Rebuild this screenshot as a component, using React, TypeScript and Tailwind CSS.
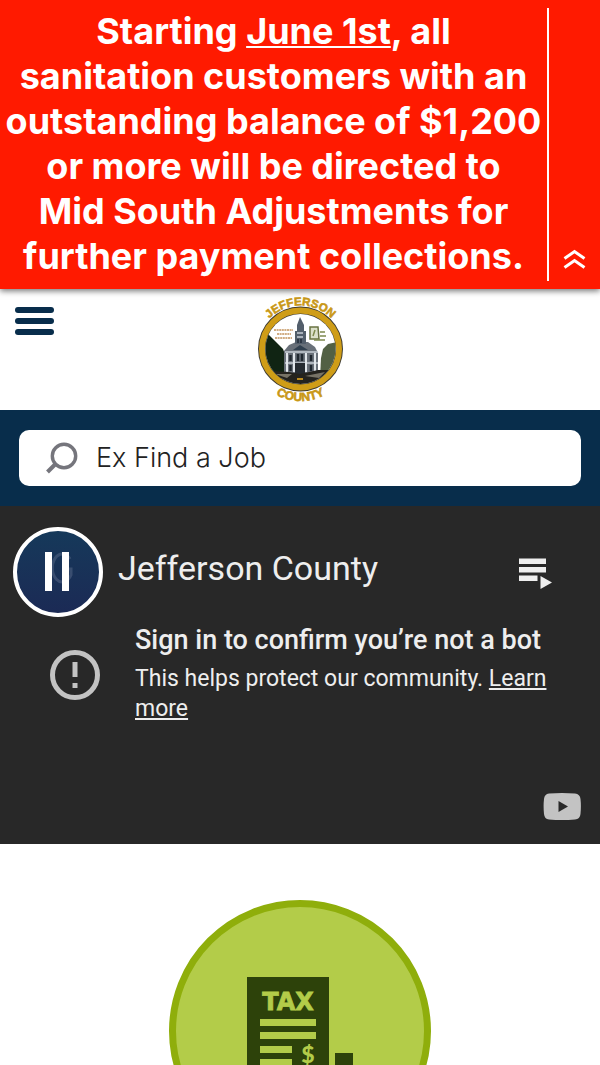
import type { ReactNode } from "react";

function AlertBanner() {
  return (
    <section
      aria-label="Alert"
      className="relative z-10 flex bg-[#ff1a00] py-2 text-white shadow-[0_2px_6px_rgba(0,0,0,0.55)]"
    >
      <p className="flex-1 pt-px pb-0.5 text-center text-[36px] leading-[45px] font-bold">
        Starting{" "}
        <span className="underline decoration-2 underline-offset-2">June 1st</span>, all
        <br />
        sanitation customers with an
        <br />
        outstanding balance of $1,200
        <br />
        or more will be directed to
        <br />
        Mid South Adjustments for
        <br />
        further payment collections.
      </p>
      <div className="flex w-[53px] items-end justify-center border-l-2 border-white pb-2">
        <button type="button" aria-label="Collapse alert" className="block">
          <svg width="24" height="28" viewBox="0 0 24 28" fill="none" stroke="#fff" strokeWidth="3">
            <path d="M1.500 13.500 L11.500 6.500 L21.500 13.500" />
            <path d="M1.500 22.500 L11.500 15.500 L21.500 22.500" />
          </svg>
        </button>
      </div>
    </section>
  );
}

function CountySeal() {
  return (
    <svg className="overflow-visible" width="90" height="108" viewBox="0 0 90 108" role="img" aria-label="Jefferson County">
      <defs>
        <path id="arc-top" d="M2 53 A43.500 43.500 0 0 1 89 53" />
        <path id="arc-bottom" d="M-6.500 53 A52 52 0 0 0 97.500 53" />
        <clipPath id="seal-clip">
          <circle cx="45.5" cy="53" r="35" />
        </clipPath>
      </defs>
      <circle cx="45.5" cy="53" r="42.5" fill="#3d3a30" />
      <circle cx="45.5" cy="53" r="38.5" fill="none" stroke="#cf9d17" strokeWidth="6" />
      <circle cx="45.5" cy="53" r="35" fill="#fff" />
      <g clipPath="url(#seal-clip)">
        <path d="M4 34 L12 37 L20 45 L28 53 L32 64 L31 82 L4 82 Z" fill="#102413" />
        <path d="M66 62 L68 53 L73 48 L82 46 L86 82 L65 82 Z" fill="#526044" />
        <path d="M29 55 L34 49 L41 46 L53 46 L60 51 L63 57 V80 H29 Z" fill="#697079" />
        <path d="M45 21 L49 29 V35 H51 V48 H40 V35 H42 V29 Z" fill="#535e6b" />
        <path d="M42 37 H48 M42 41 H48 M30 56 H63 M30 67 H63" stroke="#c7ced6" strokeWidth="1.3" />
        <path d="M43 43 V47 M46 43 V47" stroke="#202b37" strokeWidth="1.5" />
        <path d="M38 54 L45 49 L53 54 Z" fill="#31404f" />
        <path d="M32 57 V76 M39 57 V76 M51 57 V76 M60 57 V76" stroke="#e1e6eb" strokeWidth="2" />
        <path d="M35.500 59 V65 M35.500 69 V75 M43 58 V65 M47 58 V65 M56 59 V65 M56 69 V75" stroke="#202830" strokeWidth="2.500" />
        <path d="M40 67 H50 V78 H40 Z" fill="#252b31" />
        <path d="M4 74 L34 76 L45 78 L63 74 L86 74 V92 H4 Z" fill="#24231e" />
        <path d="M20 78 L37 78 L32 82 Z M50 80 L70 76 L64 82 Z" fill="#777366" />
        <path d="M19 34 H38 M22 38 H36 M20 42 H37" stroke="#c69864" strokeWidth="2" strokeDasharray="2 0.600" opacity="0.8" />
        <path d="M55 31 H63 L64 43 H55 Z" fill="#dbe0ca" stroke="#697342" strokeWidth="1.500" />
        <path d="M60 34 L58 40 M65 36 H70 M65 40 H71 M59 44 H70" stroke="#7e894d" strokeWidth="1.500" />
        <path d="M42 83 H48" stroke="#ba8b20" strokeWidth="2" />
      </g>
      <g
        fill="#c99817"
        stroke="#c99817"
        strokeWidth="0.6"
        fontFamily="'Liberation Sans', sans-serif"
        fontWeight="700"
        fontSize="11.5"
        textAnchor="middle"
      >
        <text>
          <textPath href="#arc-top" startOffset="50%">JEFFERSON</textPath>
        </text>
        <text fontSize="12">
          <textPath href="#arc-bottom" startOffset="50%">COUNTY</textPath>
        </text>
      </g>
    </svg>
  );
}

function Header() {
  return (
    <header className="grid h-[121px] grid-cols-[1fr_auto_1fr] items-start px-[15px]">
      <button type="button" aria-label="Open menu" className="mt-[18px] flex w-[39px] flex-col gap-[5px]">
        <span className="h-[6px] w-full rounded-full bg-[#082d4b]" />
        <span className="h-[6px] w-full rounded-full bg-[#082d4b]" />
        <span className="h-[6px] w-full rounded-full bg-[#082d4b]" />
      </button>
      <a href="#home" className="mt-[7px] block">
        <CountySeal />
      </a>
    </header>
  );
}

function SearchBar() {
  return (
    <form role="search" className="bg-[#082d4b] px-[19px] pt-5 pb-5">
      <div className="flex h-14 items-center rounded-[10px] bg-white pl-[26px]">
        <svg width="34" height="34" viewBox="0 0 34 34" fill="none" stroke="#75757c" strokeWidth="3.4">
          <circle cx="19" cy="15" r="11.7" />
          <path d="M10.500 23 L2.500 31" strokeWidth="4" />
        </svg>
        <input
          type="search"
          aria-label="Search"
          placeholder="Ex Find a Job"
          className="ml-[17px] min-w-0 flex-1 bg-transparent text-[27px] leading-8 font-light text-[#222] outline-none placeholder:text-[#222]"
        />
      </div>
    </form>
  );
}

function PauseButton() {
  return (
    <button
      type="button"
      aria-label="Pause video"
      className="flex size-[90px] shrink-0 items-center justify-center rounded-full border-4 border-white bg-linear-to-b from-[#15395a] to-[#1b2a55]"
    >
      <svg width="40" height="40" viewBox="0 0 40 40">
        <path d="M32 7 A10 14 0 1 0 33 23 V17 H26" fill="none" stroke="#6a7795" strokeWidth="3" opacity="0.4" />
        <path d="M7 0 H14 V39 H7 Z M24 0 H31 V39 H24 Z" fill="#fff" />
      </svg>
    </button>
  );
}

function VideoPanel() {
  return (
    <section
      aria-label="Video"
      className="flex h-[338px] flex-col bg-[#282828] pt-[21px] font-[Roboto,sans-serif] text-[#eee]"
    >
      <div className="flex items-start pr-[47px] pl-[13px]">
        <PauseButton />
        <h2 className="mt-5 ml-[15px] flex-1 text-[34px] leading-[42px] font-normal">Jefferson County</h2>
        <button type="button" aria-label="Playlist" className="mt-[31px]">
          <svg width="34" height="32" viewBox="0 0 34 32" fill="#eee">
            <path d="M0 0.500 H27 V6 H0 Z M0 9 H27 V14.500 H0 Z M0 17.500 H18.500 V23 H0 Z M21.500 18 L33 24.500 L21.500 31 Z" />
          </svg>
        </button>
      </div>
      <div className="flex items-start pr-8 pl-[50px]">
        <svg className="mt-[33px] shrink-0" width="50" height="50" viewBox="0 0 50 50" fill="none" stroke="#c3c3c3">
          <circle cx="25" cy="25" r="22.500" strokeWidth="5" />
          <path d="M25 12 V27" strokeWidth="5" />
          <path d="M25 33 V38" strokeWidth="5" />
        </svg>
        <div className="ml-[35px] flex-1">
          <h3 className="mt-[7px] text-[27px] leading-8 font-medium whitespace-nowrap">
            Sign in to confirm you’re not a bot
          </h3>
          <p className="mt-2 text-[23px] leading-[30px]">
            This helps protect our community.{" "}
            <a href="#learn" className="underline decoration-2 underline-offset-2">
              Learn more
            </a>
          </p>
        </div>
      </div>
      <a href="#youtube" aria-label="YouTube" className="mt-auto mr-[19px] mb-[24px] self-end">
        <svg width="38" height="27" viewBox="0 0 38 27">
          <path d="M6 0.500 Q19 -0.500 32 0.500 Q37 1 37.500 6 Q38.300 13 37.500 21 Q37 26 32 26.500 Q19 27.500 6 26.500 Q1.500 26 1 21 Q0.200 13 1 6 Q1.500 1 6 0.500 Z" fill="#c3c3c3" />
          <path d="M15.500 8 L25 13.500 L15.500 19 Z" fill="#282828" />
        </svg>
      </a>
    </section>
  );
}

function ServiceCircle({ label, children }: { label: string; children: ReactNode }) {
  return (
    <a
      href="#tax"
      aria-label={label}
      className="flex size-[262px] items-center justify-center rounded-full border-[7px] border-[#8fae0b] bg-[#b3cc49]"
    >
      {children}
    </a>
  );
}

function TaxIcon() {
  return (
    <svg width="106" height="108" viewBox="0 0 106 108">
      <path d="M0 0 H82 V108 H0 Z M88 76 H106 V108 H88 Z" fill="#2d420a" />
      <text
        x="41"
        y="33"
        fill="#b3cc49"
        stroke="#b3cc49"
        strokeWidth="0.8"
        fontFamily="'DejaVu Sans', sans-serif"
        fontWeight="700"
        fontSize="24"
        textAnchor="middle"
      >
        TAX
      </text>
      <path d="M13 42 H69 V49 H13 Z M13 55 H69 V62 H13 Z M13 69 H45 V76 H13 Z M13 82 H45 V89 H13 Z" fill="#b3cc49" />
      <text x="61" y="86" fill="#b3cc49" fontFamily="Lato, sans-serif" fontWeight="900" fontSize="23" textAnchor="middle">
        $
      </text>
    </svg>
  );
}

export default function App() {
  return (
    <div className="bg-white font-[Inter,sans-serif]">
      <AlertBanner />
      <Header />
      <SearchBar />
      <main>
        <VideoPanel />
        <section aria-label="Services" className="flex justify-center pt-14">
          <ServiceCircle label="Taxes">
            <TaxIcon />
          </ServiceCircle>
        </section>
      </main>
    </div>
  );
}
